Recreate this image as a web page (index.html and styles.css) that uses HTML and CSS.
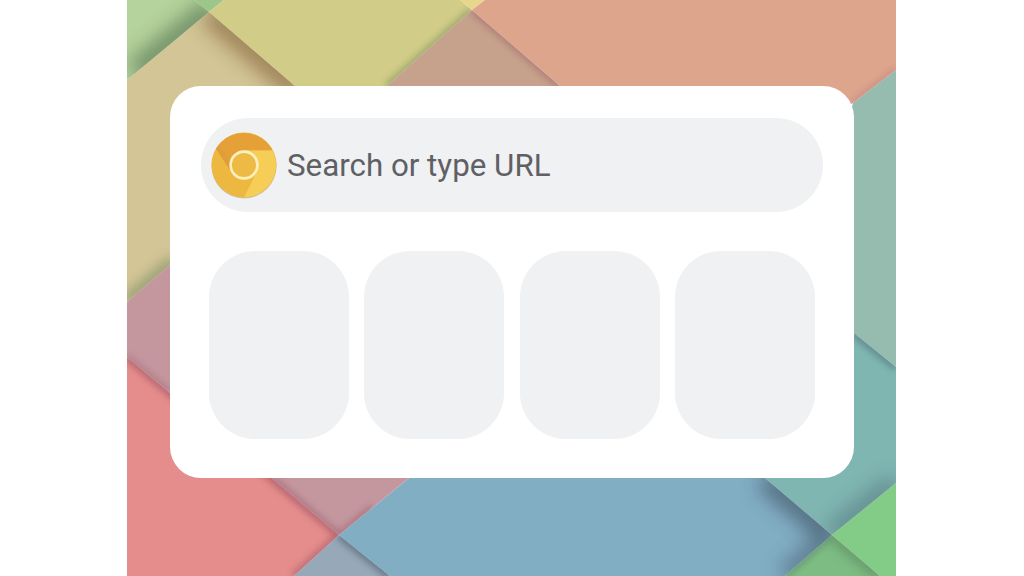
FILE: index.html
```html
<!DOCTYPE html>
<html lang="en">
<head>
<meta charset="utf-8">
<title>Search</title>
<link rel="stylesheet" href="styles.css">
</head>
<body>
<main class="stage">
  <svg class="wallpaper" viewBox="127 0 769 576" aria-hidden="true">
    <defs>
      <filter id="b3" x="-50%" y="-50%" width="200%" height="200%"><feGaussianBlur stdDeviation="3"/></filter>
      <filter id="b6" x="-50%" y="-50%" width="200%" height="200%"><feGaussianBlur stdDeviation="6"/></filter>
      <filter id="b10" x="-50%" y="-50%" width="200%" height="200%"><feGaussianBlur stdDeviation="10"/></filter>
      <clipPath id="c-lg"><polygon points="127,0 194,0 209,12 127,80"/></clipPath>
      <clipPath id="c-tan"><polygon points="127,80 209,12 295,86 400,176 170,265 127,302"/></clipPath>
      <clipPath id="c-olive"><polygon points="209,12 224,0 460,0 472,10 387,86 295,86"/></clipPath>
      <clipPath id="c-mauve"><polygon points="472,10 560,86 387,86"/></clipPath>
      <clipPath id="c-salmon"><polygon points="485,0 896,0 896,70 853,103 700,200 560,86 472,10"/></clipPath>
      <clipPath id="c-teal"><polygon points="854,333 896,367 896,483 832,535 765,478 700,400"/></clipPath>
      <clipPath id="c-blue"><polygon points="409,478 765,478 832,535 785,576 390,576 339,535"/></clipPath>
      <clipPath id="c-dgreen"><polygon points="832,535 880,576 785,576"/></clipPath>
      <clipPath id="c-red"><polygon points="127,357 272,478 339,535 294,576 127,576"/></clipPath>
      <clipPath id="c-pink"><polygon points="272,478 409,478 339,535"/></clipPath>
      <clipPath id="c-pinkl"><polygon points="127,302 170,265 300,300 272,478 127,357"/></clipPath>
      <clipPath id="c-gb"><polygon points="339,535 390,576 294,576"/></clipPath>
    </defs>
    <polygon class="p-lg" points="127,0 194,0 209,12 127,80"/>
    <polygon class="p-tg2" points="194,0 224,0 209,12"/>
    <polygon class="p-tan" points="127,80 209,12 295,86 400,176 170,265 127,302"/>
    <polygon class="p-olive" points="209,12 224,0 460,0 472,10 387,86 295,86"/>
    <polygon class="p-yellow" points="460,0 485,0 472,10"/>
    <polygon class="p-mauve" points="472,10 560,86 387,86"/>
    <polygon class="p-salmon" points="485,0 896,0 896,70 853,103 700,200 560,86 472,10"/>
    <polygon class="p-tg" points="853,103 896,70 896,367 854,333 800,300"/>
    <polygon class="p-teal" points="854,333 896,367 896,483 832,535 765,478 700,400"/>
    <polygon class="p-blue" points="409,478 765,478 832,535 785,576 390,576 339,535"/>
    <polygon class="p-green" points="896,483 832,535 880,576 896,576"/>
    <polygon class="p-dgreen" points="832,535 880,576 785,576"/>
    <polygon class="p-red" points="127,357 272,478 339,535 294,576 127,576"/>
    <polygon class="p-pink" points="272,478 409,478 339,535"/>
    <polygon class="p-pink" points="127,302 170,265 300,300 272,478 127,357"/>
    <polygon class="p-gb" points="339,535 390,576 294,576"/>

    <g clip-path="url(#c-lg)">
      <line class="sh-moss w24 o6" x1="135" y1="73" x2="215" y2="7" filter="url(#b10)"/>
    </g>
    <g clip-path="url(#c-tan)">
      <line class="sh-brown w24 o6" x1="209" y1="12" x2="300" y2="90" filter="url(#b10)"/>
      <line class="sh-moss w14 o4" x1="127" y1="302" x2="175" y2="261" filter="url(#b6)"/>
    </g>
    <g clip-path="url(#c-olive)">
      <line class="sh-moss w6 o4" x1="472" y1="10" x2="387" y2="86" filter="url(#b3)"/>
    </g>
    <g clip-path="url(#c-mauve)">
      <line class="sh-rose w6 o4" x1="472" y1="10" x2="560" y2="86" filter="url(#b3)"/>
    </g>
    <g clip-path="url(#c-salmon)">
      <line class="sh-rose w6 o2" x1="896" y1="70" x2="853" y2="103" filter="url(#b3)"/>
    </g>
    <g clip-path="url(#c-teal)">
      <line class="sh-navy w8 o4" x1="854" y1="333" x2="896" y2="367" filter="url(#b3)"/>
      <line class="sh-navy w20 o4" x1="896" y1="483" x2="832" y2="535" filter="url(#b10)"/>
    </g>
    <g clip-path="url(#c-blue)">
      <line class="sh-navy w24 o6" x1="765" y1="478" x2="832" y2="535" filter="url(#b10)"/>
      <line class="sh-navy w20 o5" x1="832" y1="535" x2="785" y2="576" filter="url(#b10)"/>
    </g>
    <g clip-path="url(#c-dgreen)">
      <line class="sh-moss w10 o5" x1="832" y1="535" x2="880" y2="576" filter="url(#b6)"/>
      <line class="sh-navy w6 o3" x1="832" y1="535" x2="785" y2="576" filter="url(#b3)"/>
    </g>
    <g clip-path="url(#c-red)">
      <line class="sh-rose w8 o5" x1="127" y1="357" x2="339" y2="535" filter="url(#b3)"/>
      <line class="sh-rose w8 o4" x1="339" y1="535" x2="294" y2="576" filter="url(#b3)"/>
    </g>
    <g clip-path="url(#c-pink)">
      <line class="sh-rose w6 o4" x1="272" y1="478" x2="339" y2="535" filter="url(#b3)"/>
      <line class="sh-rose w6 o4" x1="339" y1="535" x2="372" y2="507" filter="url(#b3)"/>
    </g>
    <g clip-path="url(#c-pinkl)">
      <line class="sh-rose w6 o3" x1="127" y1="357" x2="170" y2="392" filter="url(#b3)"/>
    </g>
    <g clip-path="url(#c-gb)">
      <line class="sh-navy w8 o5" x1="339" y1="535" x2="390" y2="576" filter="url(#b3)"/>
    </g>
  </svg>

  <section class="card">
    <div class="search">
      <svg class="logo" viewBox="-34 -34 68 68" aria-hidden="true">
        <circle class="logo-shadow" cx="0" cy="1" r="32.5"/>
        <circle class="logo-left" r="32.5"/>
        <path class="logo-top" d="M0-14.5H28.6A32.5 32.5 0 0 0-28.1-16.3L-12.56 7.25Z"/>
        <path class="logo-right" d="M0-14.5H28.6A32.5 32.5 0 0 1 0 32.5L12.56 7.25Z"/>
        <path class="logo-fold" d="M-28.1-16.3L-12.56 7.25L-9 4L-24-19Z"/>
        <circle class="logo-ring" r="13.4"/>
      </svg>
      <span class="search-label">Search or type URL</span>
    </div>
    <div class="tiles">
      <div class="tile"></div>
      <div class="tile"></div>
      <div class="tile"></div>
      <div class="tile"></div>
    </div>
  </section>
</main>
</body>
</html>
```
FILE: styles.css
```css
* { box-sizing: border-box; }
html, body { margin: 0; height: 100%; background: #fff; overflow: hidden; }
.stage {
  position: relative;
  width: 769px;
  height: 576px;
  margin-left: 127px;
  padding: 86px 42px 98px 42.5px;
}
.wallpaper { position: absolute; inset: 0; width: 769px; height: 576px; display: block; }
.card {
  position: relative;
  height: 392px;
  background: #fff;
  border-radius: 31px;
  padding: 32px 31px 39px;
  display: flex;
  flex-direction: column;
  gap: 39px;
}
.search {
  height: 94px;
  border-radius: 47px;
  background: #f0f1f3;
  display: flex;
  align-items: center;
  padding-left: 9.5px;
  gap: 9px;
}
.logo { width: 68px; height: 68px; flex: none; margin-top: -1px; }
.search-label {
  font-family: Roboto, "Liberation Sans", sans-serif;
  font-size: 31.3px;
  color: #5f6064;
  line-height: 1;
  margin-top: 2px;
}
.tiles {
  display: grid;
  grid-template-columns: repeat(4, 1fr);
  gap: 15.5px;
  padding: 0 8px;
  height: 188px;
}
.tile { background: #f0f1f3; border-radius: 46px; }

.p-lg { fill: #b5d39c; }
.p-tg2 { fill: #9ec68a; }
.p-tan { fill: #d3c596; }
.p-olive { fill: #d1cc87; }
.p-yellow { fill: #e8d68c; }
.p-mauve { fill: #c6a18c; }
.p-salmon { fill: #dea58d; }
.p-tg { fill: #96bcb0; }
.p-teal { fill: #7fb6b2; }
.p-blue { fill: #82aec4; }
.p-green { fill: #82cc88; }
.p-dgreen { fill: #7dbd83; }
.p-red { fill: #e58d8c; }
.p-pink { fill: #c4979f; }
.p-gb { fill: #97a8b8; }

.sh-moss { stroke: #4c6b4a; }
.sh-brown { stroke: #7d5a30; }
.sh-rose { stroke: #8c4458; }
.sh-navy { stroke: #3a4c5c; }
.w6 { stroke-width: 6; }
.w8 { stroke-width: 8; }
.w10 { stroke-width: 10; }
.w14 { stroke-width: 14; }
.w20 { stroke-width: 20; }
.w24 { stroke-width: 24; }
.o2 { opacity: .2; }
.o3 { opacity: .3; }
.o4 { opacity: .4; }
.o5 { opacity: .5; }
.o6 { opacity: .65; }

.logo-shadow { fill: #c9c2a8; }
.logo-left { fill: #ecb840; }
.logo-top { fill: #e5a038; }
.logo-right { fill: #f6cd56; }
.logo-fold { fill: #dc9a3c; opacity: .5; }
.logo-ring { fill: #edbb45; stroke: #fbf0bc; stroke-width: 2.6; }
```
